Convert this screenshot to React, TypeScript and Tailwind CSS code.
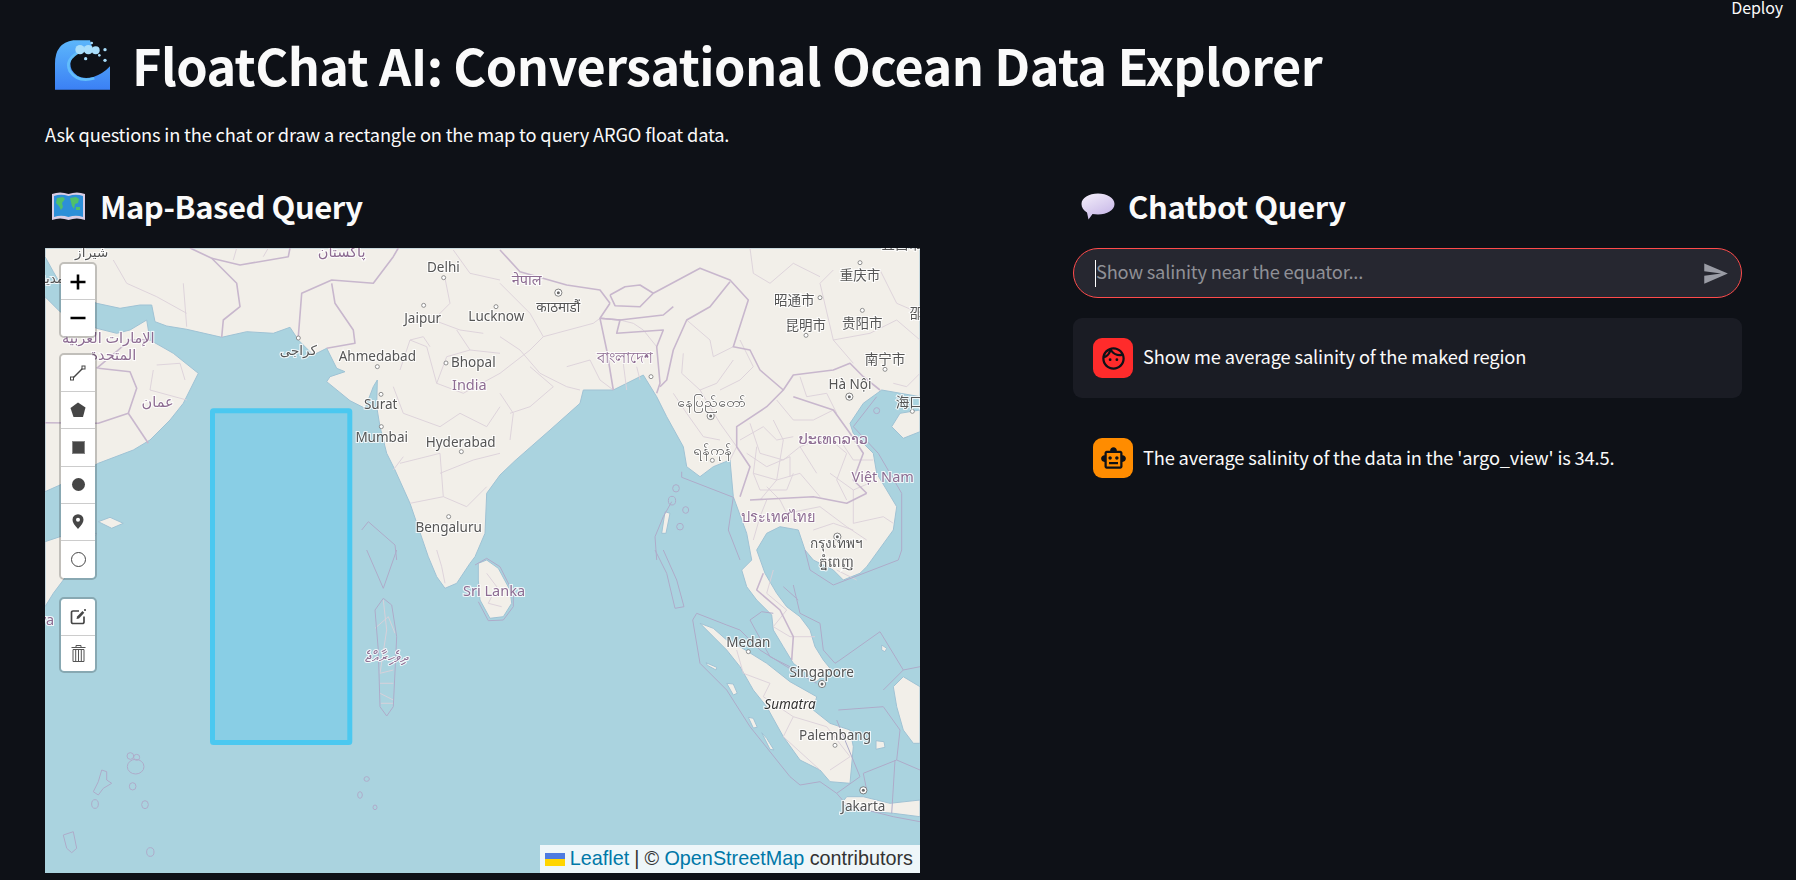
import type { ReactNode } from 'react';
import { MdOutlineFace, MdOutlineSmartToy, MdSend } from 'react-icons/md';

// zoomed crops of the map: origin of each frame, all points below are written in crop pixels
const frames = { a: [40, 240], b: [40, 550], c: [500, 240], d: [500, 550] } as const;
type Frame = keyof typeof frames;
type Seg = [Frame, number[]];

const toMap = (segs: Seg[]) =>
  segs
    .flatMap(([f, c]) => {
      const out: string[] = [];
      for (let i = 0; i < c.length; i += 2) {
        out.push(`${(frames[f][0] + c[i] / 3 - 45).toFixed(1)},${(frames[f][1] + c[i + 1] / 3 - 248).toFixed(1)}`);
      }
      return out;
    })
    .join(' ');

const pos = (f: Frame, x: number, y: number) => ({ x: frames[f][0] + x / 3 - 45, y: frames[f][1] + y / 3 - 248 });

const land: Seg[][] = [
  // mainland asia
  [
    ['a', [15, 50, 40, 95, 60, 130, 110, 165, 170, 190, 240, 205, 300, 195, 335, 195, 345, 245, 380, 258, 440, 268, 545, 292, 620, 275, 700, 280, 750, 262, 775, 300, 820, 345, 860, 325, 890, 385, 915, 395, 870, 410, 860, 425, 930, 482, 975, 505, 1000, 440, 1012, 420, 1010, 500, 1020, 560, 1040, 640, 1065, 690, 1110, 790, 1165, 950]],
    ['b', [1190, 80, 1215, 115, 1250, 100, 1290, 40, 1305, 20]],
    ['a', [1335, 880, 1340, 760, 1380, 705]],
    ['c', [45, 662, 150, 570, 240, 490, 250, 450, 340, 450, 430, 405, 470, 470, 500, 530, 550, 620, 560, 680, 600, 710, 640, 680, 690, 660, 700, 770, 740, 880, 755, 960]],
    ['d', [725, 60, 740, 110, 770, 150, 815, 195, 820, 240, 850, 290, 880, 340, 950, 395, 990, 355, 970, 330, 945, 290, 930, 240, 900, 200, 860, 170, 830, 130, 795, 70, 770, 0]],
    ['c', [800, 880, 840, 860, 895, 870, 915, 930]],
    ['d', [940, 30, 1000, 60, 1030, 90, 1080, 70, 1100, 50]],
    ['c', [1180, 870, 1190, 800, 1130, 700, 1120, 640, 1060, 580, 1050, 550, 1090, 490, 1145, 450, 1260, 470, 1260, 24]],
    ['a', [15, 24]],
  ],
  // arabia
  [['a', [15, 170, 60, 215, 170, 265, 230, 280, 270, 270, 320, 240, 330, 300, 400, 340, 475, 400, 430, 490, 390, 540, 330, 600, 280, 630, 175, 670, 60, 735, 15, 755]]],
  // horn of africa
  [
    ['a', [15, 905, 60, 890, 170, 880]],
    ['b', [70, 90, 40, 130, 15, 170]],
  ],
  // socotra
  [['a', [175, 845, 210, 832, 250, 850, 215, 865]]],
  // sri lanka
  [['b', [1315, 40, 1340, 30, 1375, 55, 1410, 120, 1415, 160, 1390, 200, 1350, 205, 1320, 150, 1315, 90]]],
  // hainan
  [['c', [1175, 560, 1200, 520, 1260, 510, 1260, 575, 1210, 595]]],
  // sumatra
  [['d', [600, 220, 640, 235, 680, 270, 720, 290, 800, 340, 870, 395, 950, 440, 940, 480, 990, 520, 1050, 540, 1060, 590, 1050, 700, 990, 695, 960, 660, 900, 630, 850, 560, 800, 470, 760, 420, 720, 350, 680, 300]]],
  // java
  [['d', [1040, 740, 1090, 740, 1170, 760, 1260, 750, 1260, 800, 1180, 790, 1060, 780, 1025, 760]]],
  // borneo
  [['d', [1180, 410, 1210, 380, 1260, 410, 1260, 580, 1240, 580, 1210, 540, 1190, 470]]],
  // small islands
  [['d', [618, 338, 650, 352, 648, 360, 622, 346]]],
  [['d', [680, 400, 700, 402, 712, 430, 700, 435]]],
  [['d', [745, 502, 760, 505, 772, 532, 760, 534]]],
  [['d', [785, 548, 800, 565, 822, 600, 810, 598]]],
  [['d', [1128, 572, 1152, 575, 1155, 592, 1128, 598]]],
  [['d', [1145, 285, 1160, 295, 1155, 305, 1145, 300]]],
  [['c', [495, 815, 510, 820, 498, 880, 485, 880]]],
];

const borders: Seg[][] = [
  [['a', [515, 55, 600, 75, 745, 50, 750, 24]]],
  [['a', [545, 292, 550, 240, 600, 200, 590, 130, 515, 55, 450, 24]]],
  [['a', [775, 290, 785, 160, 875, 120, 1000, 130, 1060, 50, 1075, 24]]],
  [['a', [875, 130, 885, 190, 940, 270, 945, 310, 860, 325]]],
  [['a', [175, 385, 270, 395, 290, 445, 265, 520, 175, 550, 15, 548]]],
  [['a', [265, 520, 325, 610]]],
  [['a', [170, 385, 270, 300, 330, 300]]],
  [['c', [0, 30, 60, 95, 200, 135, 300, 150, 330, 190]]],
  [['c', [330, 165, 375, 140, 420, 135, 460, 160, 420, 200, 345, 197, 330, 165]]],
  [['c', [460, 160, 600, 85, 690, 120, 745, 180, 700, 320, 750, 330, 780, 390, 850, 450, 880, 405, 1000, 390, 1050, 370, 1090, 410, 1140, 450]]],
  [['c', [690, 125, 630, 200, 560, 240, 520, 330, 500, 420, 480, 440]]],
  [['c', [300, 235, 360, 240, 350, 280, 490, 270, 470, 320, 480, 430, 470, 460]]],
  [['c', [300, 235, 320, 330, 340, 450]]],
  [['c', [330, 190, 300, 235, 360, 240, 490, 225, 520, 200]]],
  [['c', [850, 450, 800, 500, 710, 560, 710, 620, 750, 680, 720, 770]]],
  [['c', [750, 780, 940, 770, 1040, 790, 1100, 760]]],
  [['c', [880, 470, 1000, 510, 1050, 580, 1090, 640, 1060, 720, 1100, 760]]],
  [['d', [790, 70, 770, 120, 840, 180, 880, 260, 875, 330]]],
];

const thin: Seg[][] = [
  [['a', [1215, 115, 1230, 190, 1180, 240, 1260, 270, 1330, 280]]],
  [['a', [1080, 390, 1110, 300, 1160, 320, 1190, 430, 1270, 460, 1380, 400]]],
  [['a', [1060, 440, 1090, 520, 1200, 560, 1260, 520, 1340, 560, 1380, 500]]],
  [['a', [1080, 670, 1200, 640, 1210, 770, 1280, 800, 1340, 740]]],
  [['a', [1200, 700, 1300, 660, 1380, 640]]],
  [['a', [1110, 300, 1150, 290, 1170, 320]]],
  [['a', [1190, 430, 1220, 350, 1290, 330, 1380, 340]]],
  [['a', [1250, 270, 1290, 330]]],
  [['a', [1110, 790, 1210, 770]]],
  [['a', [1060, 690, 1090, 650]]],
  [['b', [1190, 0, 1205, 50, 1215, 100]]],
  [['b', [1340, 70, 1370, 110, 1345, 160, 1385, 170]]],
  [['a', [340, 390, 330, 450, 440, 480]]],
  [['a', [350, 375, 420, 370, 435, 420]]],
  [['a', [430, 130, 440, 260]]],
  [['a', [220, 60, 260, 130, 350, 170, 440, 220]]],
  [['a', [1240, 30, 1290, 100, 1380, 120]]],
  [['a', [685, 24, 670, 50]]],
  [['a', [590, 24, 580, 60]]],
  [['c', [0, 130, 90, 220, 130, 290, 90, 330, 0, 400]]],
  [['c', [130, 290, 280, 250, 300, 235]]],
  [['c', [0, 290, 60, 330, 120, 400, 200, 440, 240, 450]]],
  [['c', [30, 520, 90, 500, 160, 440, 90, 380]]],
  [['c', [0, 460, 40, 520, 30, 600]]],
  [['c', [200, 380, 270, 360, 300, 420, 340, 450]]],
  [['c', [360, 240, 400, 250, 430, 270, 470, 320]]],
  [['c', [370, 370, 380, 450]]],
  [['c', [410, 380, 420, 420]]],
  [['c', [550, 340, 545, 400, 600, 450, 650, 430, 700, 360]]],
  [['c', [560, 240, 630, 300, 640, 350, 700, 320]]],
  [['c', [600, 450, 660, 550, 710, 620, 690, 660]]],
  [['c', [520, 460, 560, 520, 610, 590, 660, 600]]],
  [['c', [750, 550, 780, 640, 850, 660, 900, 620, 950, 700]]],
  [['c', [820, 540, 850, 600, 830, 720, 780, 780]]],
  [['c', [770, 620, 760, 700, 830, 720, 900, 700, 960, 770]]],
  [['c', [900, 620, 980, 590, 1040, 640, 1010, 720, 1040, 780]]],
  [['c', [800, 740, 840, 780, 860, 820, 960, 800, 1040, 860, 1100, 900]]],
  [['c', [720, 300, 760, 380, 720, 420, 660, 450]]],
  [['c', [900, 410, 920, 470, 980, 460, 1010, 520]]],
  [['c', [830, 480, 880, 540, 940, 540, 1000, 510]]],
  [['c', [720, 600, 790, 560, 830, 600, 880, 590]]],
  [['c', [740, 640, 800, 680, 870, 650, 870, 710]]],
  [['c', [760, 700, 780, 750, 860, 750, 880, 700]]],
  [['c', [800, 780, 780, 830, 760, 900]]],
  [['c', [1020, 600, 1060, 660, 1120, 660]]],
  [['c', [990, 700, 1060, 750, 1130, 720]]],
  [['c', [1060, 750, 1060, 850, 1150, 830, 1180, 850]]],
  [['c', [940, 870, 1000, 850, 1060, 870]]],
  [['c', [1000, 90, 960, 130, 1000, 300, 1060, 370]]],
  [['c', [1140, 90, 1190, 190, 1260, 220]]],
  [['c', [1000, 300, 1110, 280, 1190, 240, 1260, 300]]],
  [['c', [1180, 430, 1220, 440, 1260, 400]]],
  [['c', [750, 24, 760, 100, 810, 130, 880, 70, 960, 110]]],
  [['d', [820, 60, 800, 130, 860, 180, 820, 230, 870, 260, 945, 260]]],
  [['d', [710, 300, 730, 370, 810, 400, 790, 440, 880, 500, 850, 560, 960, 660]]],
  [['d', [880, 500, 980, 530, 1050, 620, 990, 660]]],
  [['d', [1010, 60, 1070, 90]]],
  [['b', [1005, 235, 1045, 200, 1065, 250]]],
  [['b', [1030, 150, 1040, 240, 1020, 370, 1060, 360]]],
  [['b', [1020, 400, 1060, 400]]],
  [['b', [1020, 430, 1060, 450]]],
  [['b', [1022, 460, 1060, 460]]],
];

const maritime: Seg[][] = [
  [['a', [965, 870, 985, 845, 1065, 915, 1070, 960]]],
  [['b', [980, 0, 1030, 115, 1070, 0]]],
  [['b', [1005, 180, 1030, 145, 1055, 165, 1070, 260, 1060, 470, 1040, 498, 1020, 470, 1015, 300, 1005, 180]]],
  [['b', [1305, 45, 1340, 25, 1380, 50, 1420, 130, 1420, 170, 1390, 210, 1345, 212, 1315, 155]]],
  [['c', [545, 695, 545, 712, 700, 772, 685, 870, 720, 960]]],
  [['c', [515, 785, 490, 830, 465, 890, 470, 960]]],
  [['d', [465, 0, 500, 70, 525, 175, 552, 170, 530, 90, 490, 0]]],
  [['d', [1000, 105, 1195, 30, 1205, 0]]],
  [['c', [1205, 930, 1205, 760, 1135, 640, 1060, 560, 1130, 470]]],
  [['d', [915, 0, 930, 60, 1000, 105]]],
  [['d', [590, 190, 578, 210, 600, 340, 680, 420, 750, 530, 870, 680, 900, 705, 960, 695, 1010, 730, 1040, 765, 1180, 800, 1260, 815]]],
  [['d', [590, 190, 680, 225, 720, 240, 780, 300, 860, 350, 950, 400]]],
  [['d', [750, 210, 785, 185, 820, 190]]],
  [['d', [750, 210, 810, 320, 870, 350]]],
  [['d', [880, 105, 900, 190, 960, 220, 970, 300, 1005, 340, 1020, 330, 1140, 245, 1210, 360, 1260, 350]]],
  [['d', [850, 110, 895, 150]]],
  [['d', [1150, 420, 1210, 360]]],
  [['d', [1015, 480, 1150, 470, 1200, 540, 1190, 630, 1260, 660]]],
  [['d', [1190, 630, 1090, 670, 1100, 720]]],
  [['d', [1080, 680, 1010, 510]]],
  [['d', [1010, 730, 1080, 680]]],
  [['d', [1185, 630, 1175, 790]]],
];

// outlined atolls and islets
const blobs: [Frame, number, number, number, number][] = [
  ['b', 271, 618, 10, 10],
  ['b', 290, 622, 9, 9],
  ['b', 287, 650, 25, 22],
  ['b', 278, 709, 10, 11],
  ['b', 165, 762, 10, 13],
  ['b', 315, 764, 10, 12],
  ['b', 331, 906, 11, 13],
  ['b', 980, 687, 8, 7],
  ['b', 1005, 772, 6, 7],
  ['b', 960, 735, 7, 10],
  ['c', 528, 745, 10, 11],
  ['c', 516, 782, 11, 13],
  ['c', 557, 810, 9, 10],
  ['c', 540, 860, 10, 10],
  ['c', 1130, 512, 9, 9],
];

const seychelles: Seg[] = [['b', [185, 660, 200, 665, 200, 690, 215, 700, 190, 715, 175, 735, 160, 725, 175, 695]]];
const aldabra: Seg[] = [['b', [70, 855, 100, 845, 110, 895, 95, 908, 80, 895]]];

type Label = [string, Frame, number, number, 'city' | 'country', string?];

const labels: Label[] = [
  ['شيراز', 'a', 155, 50, 'city'],
  ['مدينة', 'a', 28, 128, 'city'],
  ['پاکستان', 'a', 905, 50, 'country'],
  ['Delhi', 'a', 1210, 97, 'city'],
  ['Jaipur', 'a', 1148, 248, 'city'],
  ['Lucknow', 'c', -11, 243, 'city'],
  ['الإمارات العربية', 'a', 205, 310, 'country'],
  ['المتحدة', 'a', 220, 360, 'country'],
  ['كراجى', 'a', 775, 345, 'city'],
  ['Ahmedabad', 'a', 1012, 362, 'city'],
  ['Bhopal', 'a', 1300, 382, 'city'],
  ['India', 'a', 1288, 450, 'country'],
  ['عمان', 'a', 353, 500, 'country'],
  ['Surat', 'a', 1022, 508, 'city'],
  ['Mumbai', 'a', 1025, 605, 'city'],
  ['Hyderabad', 'a', 1262, 620, 'city'],
  ['Bengaluru', 'a', 1226, 876, 'city'],
  ['Sri Lanka', 'b', 1362, 137, 'country'],
  ['ދިވެހިރާއްޖެ', 'b', 1040, 335, 'country'],
  ['Soomaaliya', 'b', -75, 225, 'country'],
  ['नेपाल', 'c', 80, 135, 'country'],
  ['काठमाडौं', 'c', 175, 215, 'city'],
  ['বাংলাদেশ', 'c', 375, 368, 'country'],
  ['နေပြည်တော်', 'c', 635, 500, 'city'],
  ['ရန်ကုန်', 'c', 638, 645, 'city'],
  ['宜昌市', 'c', 1205, 28, 'city'],
  ['重庆市', 'c', 1080, 120, 'city'],
  ['昭通市', 'c', 883, 195, 'city'],
  ['昆明市', 'c', 917, 270, 'city'],
  ['贵阳市', 'c', 1087, 265, 'city'],
  ['邵阳市', 'c', 1290, 235, 'city'],
  ['南宁市', 'c', 1155, 372, 'city'],
  ['Hà Nội', 'c', 1050, 448, 'city'],
  ['海口', 'c', 1228, 502, 'city'],
  ['ປະເທດລາວ', 'c', 1000, 612, 'country'],
  ['Việt Nam', 'c', 1148, 725, 'country'],
  ['ประเทศไทย', 'c', 835, 845, 'country'],
  ['กรุงเทพฯ', 'c', 1010, 925, 'city'],
  ['ភ្នំពេញ', 'd', 1010, 50, 'city'],
  ['Medan', 'd', 745, 290, 'city'],
  ['Singapore', 'd', 965, 380, 'city'],
  ['Sumatra', 'd', 870, 478, 'city', 'italic'],
  ['Palembang', 'd', 1005, 570, 'city'],
  ['Jakarta', 'd', 1090, 782, 'city'],
];

const towns: [Frame, number, number][] = [
  ['a', 1211, 113],
  ['a', 1151, 196],
  ['a', 1368, 200],
  ['a', 775, 294],
  ['a', 1012, 380],
  ['a', 1218, 369],
  ['a', 1023, 463],
  ['a', 1024, 560],
  ['a', 1264, 635],
  ['a', 1226, 830],
  ['c', 453, 410],
  ['c', 637, 661],
  ['c', 1080, 68],
  ['c', 960, 173],
  ['c', 918, 286],
  ['c', 1087, 211],
  ['c', 1155, 388],
  ['c', 1237, 514],
  ['d', 745, 305],
  ['d', 1005, 586],
];

const capitals: [Frame, number, number][] = [
  ['c', 175, 158],
  ['c', 632, 528],
  ['c', 1048, 470],
  ['c', 1012, 890],
  ['d', 966, 402],
  ['d', 1090, 721],
];

function MapTiles() {
  return (
    <svg viewBox="0 0 875 625" className="absolute inset-0 h-full w-full" aria-label="OpenStreetMap tiles">
      <defs>
        <filter id="soft" x="-5%" y="-5%" width="110%" height="110%">
          <feGaussianBlur stdDeviation="0.45" />
        </filter>
      </defs>
      <g filter="url(#soft)">
        {land.map((segs, i) => (
          <polygon key={i} points={toMap(segs)} fill="#f2efe9" stroke="#9fc2d4" strokeWidth="1" strokeLinejoin="round" />
        ))}
        {thin.map((segs, i) => (
          <polyline key={i} points={toMap(segs)} fill="none" stroke="#dbd0d9" strokeWidth="0.9" strokeLinejoin="round" />
        ))}
        {borders.map((segs, i) => (
          <polyline key={i} points={toMap(segs)} fill="none" stroke="#c8b7cd" strokeWidth="1.6" strokeLinejoin="round" />
        ))}
        {maritime.map((segs, i) => (
          <polyline key={i} points={toMap(segs)} fill="none" stroke="#aeabc9" strokeWidth="1" strokeLinejoin="round" />
        ))}
        {blobs.map(([f, x, y, rx, ry], i) => {
          const p = pos(f, x, y);
          return <ellipse key={i} cx={p.x} cy={p.y} rx={rx / 3} ry={ry / 3} fill="none" stroke="#aeabc9" strokeWidth="1" />;
        })}
        <polygon points={toMap(seychelles)} fill="none" stroke="#aeabc9" strokeWidth="1" strokeLinejoin="round" />
        <polygon points={toMap(aldabra)} fill="none" stroke="#aeabc9" strokeWidth="1" strokeLinejoin="round" />
        {towns.map(([f, x, y], i) => {
          const p = pos(f, x, y);
          return <circle key={i} cx={p.x} cy={p.y} r="2" fill="#fff" stroke="#777" strokeWidth="0.8" />;
        })}
        {capitals.map(([f, x, y], i) => {
          const p = pos(f, x, y);
          return (
            <g key={i}>
              <circle cx={p.x} cy={p.y} r="3.6" fill="#fff" stroke="#666" strokeWidth="0.8" />
              <circle cx={p.x} cy={p.y} r="1.5" fill="#666" />
            </g>
          );
        })}
        {labels.map(([text, f, x, y, kind, style]) => {
          const p = pos(f, x, y);
          return (
            <text
              key={text}
              x={p.x}
              y={p.y}
              textAnchor="middle"
              fontSize={kind === 'country' ? 14.5 : 13.5}
              fontStyle={style === 'italic' ? 'italic' : 'normal'}
              fill={kind === 'country' ? '#8d6c92' : style === 'italic' ? '#333' : '#555'}
              stroke="#ffffffcc"
              strokeWidth="2.2"
              paintOrder="stroke"
              className="font-['Noto_Sans','DejaVu_Sans','Noto_Sans_CJK_SC',sans-serif]"
            >
              {text}
            </text>
          );
        })}
      </g>
      {/* the drawn rectangle */}
      <rect x="167.5" y="162.8" width="137.3" height="331.7" rx="1" fill="#89cee5" stroke="#4bc8f0" strokeWidth="5" />
    </svg>
  );
}

function Row({ children, last, h }: { children: ReactNode; last?: boolean; h: string }) {
  return (
    <div className={`flex items-center justify-center ${h} ${last ? '' : 'border-b border-[#cccccc]'}`}>{children}</div>
  );
}

function Bar({ children }: { children: ReactNode }) {
  return (
    <div className="w-[38px] overflow-hidden rounded-[5px] border-2 border-black/20 bg-clip-padding">
      <div className="rounded-[3px] bg-white">{children}</div>
    </div>
  );
}

function MapControls() {
  return (
    <div className="absolute left-[14px] top-[14px] flex flex-col">
      <Bar>
        <Row h="h-[36px]">
          <svg width="18" height="18" viewBox="0 0 18 18">
            <path d="M9 1.5v15M1.5 9h15" stroke="#000" strokeWidth="2.6" />
          </svg>
        </Row>
        <Row h="h-[36px]" last>
          <svg width="18" height="18" viewBox="0 0 18 18">
            <path d="M1.5 9h15" stroke="#000" strokeWidth="2.4" />
          </svg>
        </Row>
      </Bar>
      <div className="mt-[15px]">
        <Bar>
          <Row h="h-[37.2px]">
            <svg width="18" height="18" viewBox="0 0 18 18" fill="none" stroke="#464646">
              <path d="M3.5 14.5 14.5 3.5" strokeWidth="1.4" />
              <rect x="1.5" y="13" width="3" height="3" fill="#fff" />
              <rect x="13" y="2" width="3" height="3" fill="#fff" />
            </svg>
          </Row>
          <Row h="h-[37.2px]">
            <svg width="16" height="16" viewBox="0 0 16 16">
              <path d="M8 .5 15.5 5.5 13 15H3.5L.5 6Z" fill="#464646" />
            </svg>
          </Row>
          <Row h="h-[37.2px]">
            <div className="h-[13px] w-[13px] border border-[#888] bg-[#464646]" />
          </Row>
          <Row h="h-[37.2px]">
            <div className="h-[13px] w-[13px] rounded-full bg-[#464646]" />
          </Row>
          <Row h="h-[37.2px]">
            <svg width="12" height="15" viewBox="0 0 12 15">
              <path fillRule="evenodd" d="M6 15C2.5 11 .5 8.6.5 5.7a5.5 5.5 0 0 1 11 0C11.5 8.6 9.500 11 6 15ZM6 3.800a2 2 0 1 0 0 4 2 2 0 0 0 0-4Z" fill="#464646" />
            </svg>
          </Row>
          <Row h="h-[37.2px]" last>
            <div className="h-[15px] w-[15px] rounded-full border border-[#464646]" />
          </Row>
        </Bar>
      </div>
      <div className="mt-[17px]">
        <Bar>
          <Row h="h-[36.5px]">
            <svg width="17" height="17" viewBox="0 0 17 17" fill="none" stroke="#464646" strokeWidth="1.7">
              <path d="M9 3H3a1.500 1.500 0 0 0-1.500 1.500v9.500A1.500 1.500 0 0 0 3 15.500h9.500a1.500 1.500 0 0 0 1.500-1.500V8.500" />
              <path d="M6.500 11l.6-2.500L12.500 3l1.800 1.800L9 10.400Z" fill="#464646" stroke="none" />
              <circle cx="15" cy="2" r="1.100" fill="#464646" stroke="none" />
            </svg>
          </Row>
          <Row h="h-[35.5px]" last>
            <svg width="15" height="18" viewBox="0 0 15 18" fill="none" stroke="#555" strokeWidth="1">
              <path d="M.5 3.500h14M5 3.500V1.500h5v2" />
              <path d="M2 5.500h11v12H2zM4.700 5.500v12M7.500 5.500v12M10.300 5.500v12" />
            </svg>
          </Row>
        </Bar>
      </div>
    </div>
  );
}

function WaveIcon() {
  return (
    <svg width="55" height="50" viewBox="0 0 165 148">
      <defs>
        <linearGradient id="waveFill" x1="0" y1="0" x2="0" y2="1">
          <stop offset="0" stopColor="#5cb6fb" />
          <stop offset="1" stopColor="#3b80f5" />
        </linearGradient>
      </defs>
      <path d="M0 148V70Q0 8 55 0H105L112 22 78 30Q35 55 50 88 70 122 115 110 145 100 165 78V148Z" fill="url(#waveFill)" />
      <path d="M76 32Q28 58 44 92 68 128 118 114" fill="none" stroke="#62bdfb" strokeWidth="8" />
      <g fill="#a9defb">
        <circle cx="75" cy="28" r="14" />
        <circle cx="100" cy="28" r="14" />
        <circle cx="122" cy="30" r="12" />
        <circle cx="110" cy="8" r="4" />
        <circle cx="150" cy="28" r="5" />
        <circle cx="150" cy="60" r="5" />
        <circle cx="133" cy="45" r="4" />
        <circle cx="92" cy="55" r="5" />
      </g>
    </svg>
  );
}

function MapEmoji() {
  return (
    <svg width="35" height="30" viewBox="0 0 35 30">
      <path d="M1 3Q9 0 17.500 3 26 0 34 3V29Q26 26 17.500 29 9 26 1 29Z" fill="#d9cde4" />
      <path d="M3 5Q10 2.500 17.500 5 25 2.500 32 5V26Q25 23.500 17.500 26 10 23.500 3 26Z" fill="#2d8fd8" />
      <path d="M6 7l6-1 2 2-3 4 1 4-2 3-2-4-3-3ZM19 7l6-1 3 2-1 4-3 1-1 5-2-3-1-4Z M25 16h4v3h-4Z" fill="#4fc06a" />
    </svg>
  );
}

function BubbleEmoji() {
  return (
    <svg width="34" height="27" viewBox="0 0 34 27">
      <defs>
        <linearGradient id="bubbleFill" x1="0" y1="0" x2="0.6" y2="1">
          <stop offset="0" stopColor="#f5f0fb" />
          <stop offset="1" stopColor="#c8b8e8" />
        </linearGradient>
      </defs>
      <path d="M17 .5C26 .5 33.500 5 33.500 11S26 21.500 17 21.500C15 21.500 13 21.300 11.500 21L7.500 26.500 6 19.500C2.500 17.500.5 14.500.5 11 .5 5 8 .5 17 .5Z" fill="url(#bubbleFill)" />
    </svg>
  );
}

function Avatar({ color, children }: { color: string; children: ReactNode }) {
  return <div className={`flex h-10 w-10 shrink-0 items-center justify-center rounded-[9px] text-[#0e1117] ${color}`}>{children}</div>;
}

export default function App() {
  return (
    <div className="h-[880px] overflow-hidden bg-[#0e1117] font-['Noto_Sans_CJK_JP','Noto_Sans',sans-serif] text-[#fafafa]">
      <div className="flex h-[14px] justify-end pr-[13px] text-[16px] leading-[14px] tracking-[-0.1px]">Deploy</div>

      <div className="mt-[26px] flex h-[50px] items-center pl-[55px]">
        <WaveIcon />
        <h1 className="ml-[22px] whitespace-nowrap text-[50.4px] font-bold leading-[50px] tracking-[-0.6px]">FloatChat AI: Conversational Ocean Data Explorer</h1>
      </div>

      <p className="ml-[45px] mt-[30px] text-[18.3px] leading-[28px] tracking-[-0.18px]">Ask questions in the chat or draw a rectangle on the map to query ARGO float data.</p>

      <div className="mt-[41px] flex pl-[45px]">
        <section className="w-[875px]">
          <div className="flex h-[34px] items-center pl-[6px]">
            <MapEmoji />
            <h2 className="ml-[14px] text-[31px] font-semibold leading-[34px] tracking-[-0.45px]">Map-Based Query</h2>
          </div>
          <div className="relative mt-[25px] h-[625px] overflow-hidden bg-[#aad3df]">
            <MapTiles />
            <MapControls />
            <div className="absolute bottom-0 right-0 flex h-[28px] items-center bg-white/80 pl-[5px] pr-[7px] font-['Liberation_Sans',sans-serif] text-[19.8px] text-[#333]">
              <span className="mr-[5px] flex h-[13px] w-[20px] flex-col">
                <span className="h-1/2 bg-[#4c7be1]" />
                <span className="h-1/2 bg-[#ffd500]" />
              </span>
              <span className="text-[#0078a8]">Leaflet</span>
              <span className="mx-[5px]">|</span>
              <span>©&nbsp;</span>
              <span className="text-[#0078a8]">OpenStreetMap</span>
              <span>&nbsp;contributors</span>
            </div>
          </div>
        </section>

        <section className="ml-[153px] w-[669px]">
          <div className="flex h-[34px] items-center pl-[8px]">
            <BubbleEmoji />
            <h2 className="ml-[13px] text-[31px] font-semibold leading-[34px] tracking-[-0.4px]">Chatbot Query</h2>
          </div>

          <div className="mt-[25px] flex h-[50px] items-center rounded-[25px] border border-[#ff4b4b] bg-[#262730] pl-[21px] pr-[12px]">
            <span className="h-[27px] w-px bg-white" />
            <span className="flex-1 pb-[4px] text-[18.3px] leading-[27px] tracking-[-0.2px] text-[#8f9096]">Show salinity near the equator...</span>
            <MdSend className="text-[#9a9ca5]" size={27} />
          </div>

          <div className="mt-[20px] flex h-[80px] items-center gap-[10px] rounded-[9px] bg-[#1a1c24] px-[20px]">
            <Avatar color="bg-[#ff2b2b]">
              <MdOutlineFace size={27} />
            </Avatar>
            <span className="pb-[2px] text-[18.3px] tracking-[-0.15px]">Show me average salinity of the maked region</span>
          </div>

          <div className="mt-[20px] flex h-[80px] items-center gap-[10px] px-[20px]">
            <Avatar color="bg-[#ff8c00]">
              <MdOutlineSmartToy size={27} />
            </Avatar>
            <span className="text-[18.3px] tracking-[-0.17px]">The average salinity of the data in the 'argo_view' is 34.5.</span>
          </div>
        </section>
      </div>
    </div>
  );
}
